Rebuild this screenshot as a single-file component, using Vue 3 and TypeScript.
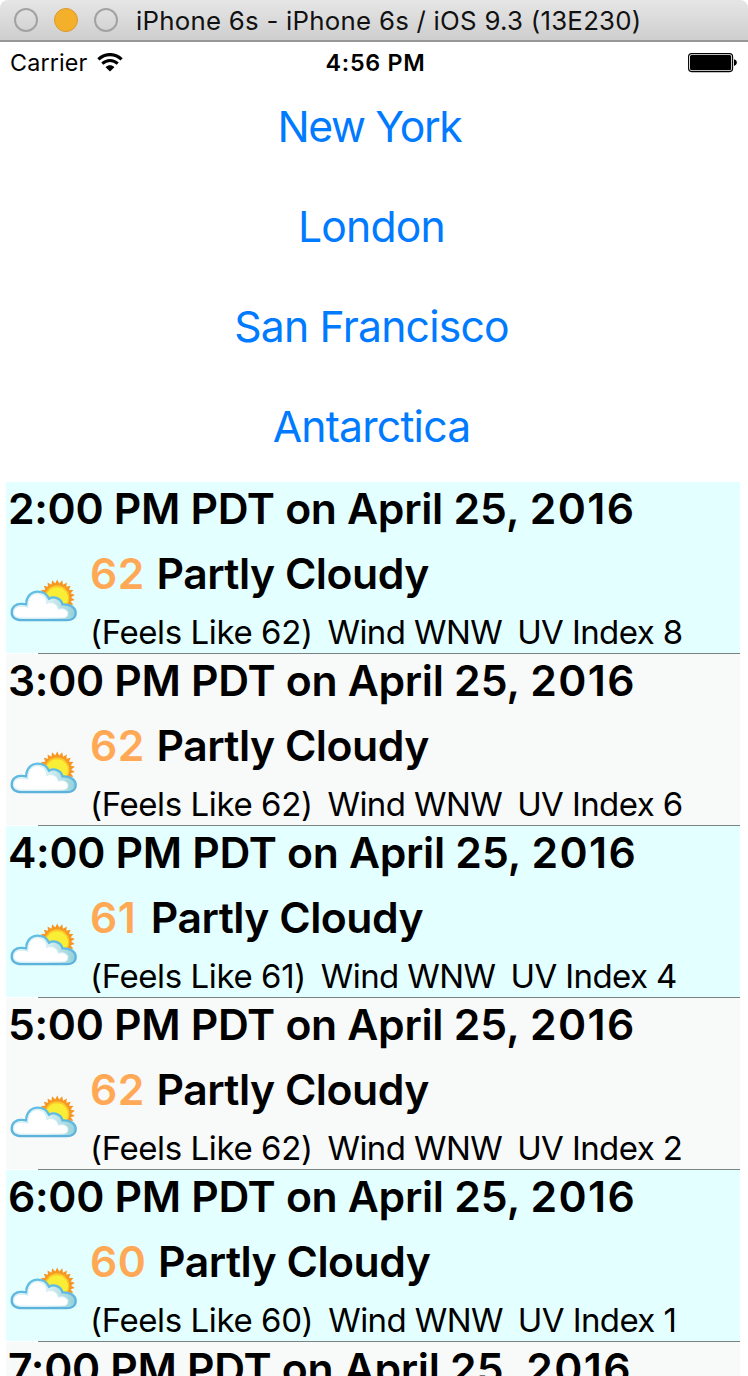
<script setup lang="ts">
interface Reading {
  temp: number
  wind: string
  uv: number
}

interface Hour {
  time: string
  reading?: Reading
}

const cities: string[] = ['New York', 'London', 'San Francisco', 'Antarctica']

const hours: Hour[] = [
  { time: '2:00 PM', reading: { temp: 62, wind: 'WNW', uv: 8 } },
  { time: '3:00 PM', reading: { temp: 62, wind: 'WNW', uv: 6 } },
  { time: '4:00 PM', reading: { temp: 61, wind: 'WNW', uv: 4 } },
  { time: '5:00 PM', reading: { temp: 62, wind: 'WNW', uv: 2 } },
  { time: '6:00 PM', reading: { temp: 60, wind: 'WNW', uv: 1 } },
  { time: '7:00 PM' },
]

// Star outline for the sun: alternating outer and inner points.
function burst(cx: number, cy: number, outer: number, inner: number, rays: number): string {
  const points: string[] = []
  for (let i = 0; i < rays * 2; i++) {
    const r = i % 2 === 0 ? outer : inner
    const a = (Math.PI * i) / rays - Math.PI / 2
    points.push(`${(cx + r * Math.cos(a)).toFixed(2)},${(cy + r * Math.sin(a)).toFixed(2)}`)
  }
  return points.join(' ')
}

const sunRays = burst(57.2, 27.4, 17.8, 14, 22)
</script>

<template>
  <div class="window">
    <header class="titlebar">
      <span class="dot"></span>
      <span class="dot dot-amber"></span>
      <span class="dot"></span>
      <span class="caption">iPhone 6s - iPhone 6s / iOS 9.3 (13E230)</span>
    </header>

    <div class="status">
      <div class="carrier">
        <span>Carrier</span>
        <svg class="wifi" width="26" height="19" viewBox="0 0 26 19">
          <path d="M1.4 6.3 C8 0 18 0 24.6 6.3" fill="none" stroke="#000" stroke-width="3.2" />
          <path d="M5.3 10.6 C9.8 6.4 16.2 6.4 20.7 10.6" fill="none" stroke="#000" stroke-width="3" />
          <path d="M8.6 14.2 C11.2 11.7 14.8 11.7 17.4 14.2 L13 18.4 Z" />
        </svg>
      </div>
      <span class="clock">4:56 PM</span>
      <svg class="battery" width="50" height="20" viewBox="0 0 50 20">
        <rect x="0.6" y="0.6" width="44" height="18" rx="3" fill="none" stroke="#000" stroke-width="1.1" />
        <rect x="2" y="2" width="41.2" height="15.2" rx="1.6" />
        <path d="M46 6.3 C49.8 7.2 49.8 12 46 12.9 Z" />
      </svg>
    </div>

    <nav class="cities">
      <a v-for="city in cities" :key="city">{{ city }}</a>
    </nav>

    <main class="hours">
      <article v-for="hour in hours" :key="hour.time" class="hour">
        <h2>{{ hour.time }} PDT on April <span class="day">25, </span><span class="year">2016</span></h2>
        <div v-if="hour.reading" class="detail">
          <svg class="icon" width="68" height="44" viewBox="10 9 68 44">
            <defs>
              <linearGradient id="cloud-rim" x1="0" y1="0" x2="0" y2="1">
                <stop offset="0" stop-color="#63bfe5" />
                <stop offset="1" stop-color="#5ab2dd" />
              </linearGradient>
              <linearGradient id="cloud-back" x1="0" y1="0" x2="1" y2="0">
                <stop offset="0.5" stop-color="#e3f5f5" />
                <stop offset="1" stop-color="#93d0d9" />
              </linearGradient>
            </defs>
            <polygon :points="sunRays" fill="#f79620" />
            <circle cx="57" cy="27.7" r="12.4" fill="#fbc52b" />
            <circle cx="57" cy="28.2" r="11" fill="#f8ee35" />
            <path
              d="M22 50.2 C15 50.2 11.7 47.3 11.7 42.4 C11.7 36.7 16.5 33.5 21 33.8 C23 34 24.5 34.1 26.2 34.4 C26.2 26.7 31 21.6 37.8 21.6 C43.4 21.6 47 24.3 49 28.7 C54 25.8 61 28.2 62.5 34.4 C69 33.8 75.7 37.2 75.7 43 C75.7 47.8 72 50.2 67 50.2 Z"
              fill="url(#cloud-back)"
              stroke="url(#cloud-rim)"
              stroke-width="2.3"
            />
            <path
              d="M22 48 C16.5 48 13.7 46 13.7 42.2 C13.7 38 17.5 35.8 22 36.2 C24 36.3 26 36.7 27.9 37.2 C27.2 29 31.3 23.7 37.2 23.7 C43 23.7 47 28 46.6 33.5 C51.8 31 57.5 34 58.5 39.2 C63.5 37.4 68 40 68 43.6 C68 46.8 66 48 62.5 48 Z"
              fill="#fff"
              stroke="#c9eaf4"
              stroke-width="0.8"
            />
          </svg>
          <div class="texts">
            <p class="summary">
              <span class="temp">{{ hour.reading.temp }}</span> <span class="sky">Partly Cloudy</span>
            </p>
            <p class="extra">
              <span class="feels">(Feels Like {{ hour.reading.temp }})</span>
              <span>Wind {{ hour.reading.wind }}</span>
              <span>UV Index {{ hour.reading.uv }}</span>
            </p>
          </div>
        </div>
      </article>
    </main>
  </div>
</template>

<style>
body {
  background: #fff;
}
</style>

<style scoped>
.window {
  width: 748px;
  height: 1376px;
  overflow: hidden;
  background: #fff;
  color: #000;
  font-family: Inter, 'Liberation Sans', sans-serif;
}

.titlebar {
  display: flex;
  align-items: center;
  gap: 16px;
  box-sizing: border-box;
  height: 42px;
  padding: 0 14px;
  border-bottom: 2px solid #979797;
  border-radius: 8px 8px 0 0;
  background: linear-gradient(#e6e6e6, #cecece);
}

.dot {
  box-sizing: border-box;
  width: 24px;
  height: 24px;
  border: 2px solid #a2a2a2;
  border-radius: 50%;
}

.dot-amber {
  border: 1px solid #dc982e;
  background: #f5b02b;
}

.caption {
  margin-left: 2px;
  color: #111;
  font-size: 25.8px;
  letter-spacing: 0.26px;
  white-space: nowrap;
}

.status {
  display: grid;
  grid-template-columns: 1fr auto 1fr;
  align-items: center;
  height: 35px;
  padding: 3px 10px 0;
  box-sizing: border-box;
  font-size: 23.3px;
  line-height: 35px;
}

.carrier {
  display: flex;
  align-items: center;
  gap: 10px;
  letter-spacing: 0.15px;
}

.clock {
  padding-left: 3px;
  font-weight: 560;
  letter-spacing: 0.7px;
}

.battery {
  justify-self: end;
}

.cities {
  display: flex;
  flex-direction: column;
  height: 405px;
}

.cities a {
  height: 100px;
  padding-right: 5px;
  color: #007aff;
  font-size: 42.7px;
  letter-spacing: -0.8px;
  line-height: 100px;
  text-align: center;
}

.cities a:first-child {
  padding-right: 9px;
  letter-spacing: -1.35px;
}

.hours {
  margin: 0 8px 0 6px;
}

.hour {
  height: 172px;
  background: linear-gradient(90deg, #fff 32px, #7c8182 32px) bottom / 100% 1px no-repeat #f8f9f9;
}

.hour:nth-child(odd) {
  background-color: #e3ffff;
}

.hour h2 {
  margin: 0;
  padding-left: 2px;
  font-size: 42.7px;
  font-weight: 570;
  letter-spacing: -0.31px;
  line-height: 53px;
  white-space: nowrap;
}

.day {
  letter-spacing: 0.1px;
}

.year {
  letter-spacing: 1.4px;
}

.detail {
  display: flex;
  gap: 12px;
  padding-left: 4px;
}

.icon {
  flex: none;
  margin-top: 44px;
}

.texts p {
  margin: 0;
  white-space: nowrap;
}

.summary {
  font-size: 42.7px;
  font-weight: 570;
  line-height: 77px;
}

.temp {
  display: inline-block;
  min-width: 49px;
  color: #ffa957;
  letter-spacing: 0.4px;
}

.sky {
  margin-left: 1px;
  letter-spacing: -0.5px;
}

.extra {
  display: flex;
  gap: 15px;
  font-size: 33px;
  letter-spacing: -0.6px;
  line-height: 40px;
}

.feels {
  letter-spacing: -0.4px;
}
</style>
